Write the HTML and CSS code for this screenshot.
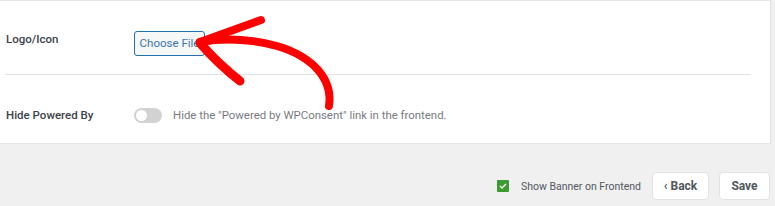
FILE: index.html
```html
<!DOCTYPE html>
<html>
<head>
<meta charset="utf-8">
<link rel="stylesheet" href="styles.css">
</head>
<body>
<div class="page">
  <div class="card">
    <div class="row row-logo">
      <div class="label">Logo/Icon</div>
      <div class="field">
        <button class="file-btn">Choose File</button>
      </div>
    </div>
    <div class="divider"></div>
    <div class="row row-powered">
      <div class="label">Hide Powered By</div>
      <div class="field field-toggle">
        <span class="toggle"><span class="knob"></span></span>
        <span class="desc">Hide the "Powered by WPConsent" link in the frontend.</span>
      </div>
    </div>
  </div>
  <div class="footer">
    <label class="check">
      <span class="box"><svg width="8" height="6" viewBox="0 0 8 6"><path d="M1 3 L3 5 L7 1" fill="none" stroke="#fff" stroke-width="1.4"/></svg></span>
      <span class="check-text">Show Banner on Frontend</span>
    </label>
    <button class="btn btn-back">&lsaquo; Back</button>
    <button class="btn btn-save">Save</button>
  </div>
  <svg class="arrow" width="775" height="206" viewBox="0 0 775 206">
    <g fill="none" stroke="#ff0000" stroke-linecap="round" stroke-linejoin="round">
      <path d="M329 106 C 333 80, 314 57, 277 46 C 251 39, 223 38, 200 42" stroke-width="8"/>
      <path d="M200 42 L 261 20" stroke-width="8"/>
      <path d="M200 43 C 213 58, 226 70, 240 81" stroke-width="9"/>
      <circle cx="201" cy="43" r="4" fill="#ff0000" stroke="none"/>
    </g>
  </svg>
</div>
</body>
</html>
```
FILE: styles.css
```css
html, body {
  margin: 0;
  padding: 0;
}
body {
  background: #f0f0f1;
  font-family: "Roboto", "Open Sans", sans-serif;
  width: 775px;
  height: 206px;
  overflow: hidden;
}
.page {
  position: relative;
  width: 775px;
  height: 206px;
}
.card {
  box-sizing: border-box;
  width: 771px;
  height: 144px;
  background: #fff;
  border-top: 1px solid #e7e7e8;
  border-right: 1px solid #e2e2e4;
  border-bottom: 1px solid #e7e7e8;
  padding: 0 19px 0 6px;
}
.row {
  display: grid;
  grid-template-columns: 128px 1fr;
  align-items: start;
}
.row-logo {
  padding-top: 29px;
  height: 73px;
  box-sizing: border-box;
}
.row-powered {
  padding-top: 32px;
}
.label {
  font-size: 11.5px;
  font-weight: 500;
  color: #3c434a;
  line-height: 18px;
}
.row-powered .label {
  margin-top: -1px;
}
.divider {
  height: 1px;
  background: #e2e2e4;
  margin-left: -1px;
}
.file-btn {
  box-sizing: border-box;
  width: 71px;
  height: 25px;
  margin-top: 1px;
  padding: 0;
  background: #f6f7f7;
  border: 1px solid #2271b1;
  border-radius: 3px;
  color: #3b76ab;
  font-family: "Roboto", sans-serif;
  font-size: 11.5px;
  line-height: 23px;
}
.field-toggle {
  display: flex;
  align-items: center;
  gap: 11px;
}
.toggle {
  position: relative;
  display: block;
  width: 28px;
  height: 15px;
  border-radius: 8px;
  background: #d2d2d3;
}
.knob {
  position: absolute;
  left: 2px;
  top: 2px;
  width: 11px;
  height: 11px;
  border-radius: 50%;
  background: #fff;
}
.desc {
  font-size: 11.4px;
  color: #787c82;
  line-height: 15px;
  margin-top: 1px;
}
.footer {
  display: flex;
  justify-content: flex-end;
  align-items: center;
  padding: 28px 5px 0 0;
}
.check {
  display: flex;
  align-items: center;
  gap: 12px;
  margin-right: 11px;
}
.box {
  width: 12px;
  height: 12px;
  background: #3a9b2e;
  border-radius: 1px;
  display: flex;
  align-items: center;
  justify-content: center;
}
.check-text {
  font-size: 10.5px;
  color: #50575e;
}
.btn {
  box-sizing: border-box;
  height: 28px;
  background: #fff;
  border: 1px solid #e2e2e4;
  border-radius: 4px;
  font-family: "Roboto", sans-serif;
  font-size: 12px;
  font-weight: 700;
  color: #50575e;
  padding: 0;
}
.btn-back {
  width: 57px;
  margin-right: 10px;
}
.btn-save {
  width: 51px;
}
.arrow {
  position: absolute;
  left: 0;
  top: 0;
  pointer-events: none;
}
```
